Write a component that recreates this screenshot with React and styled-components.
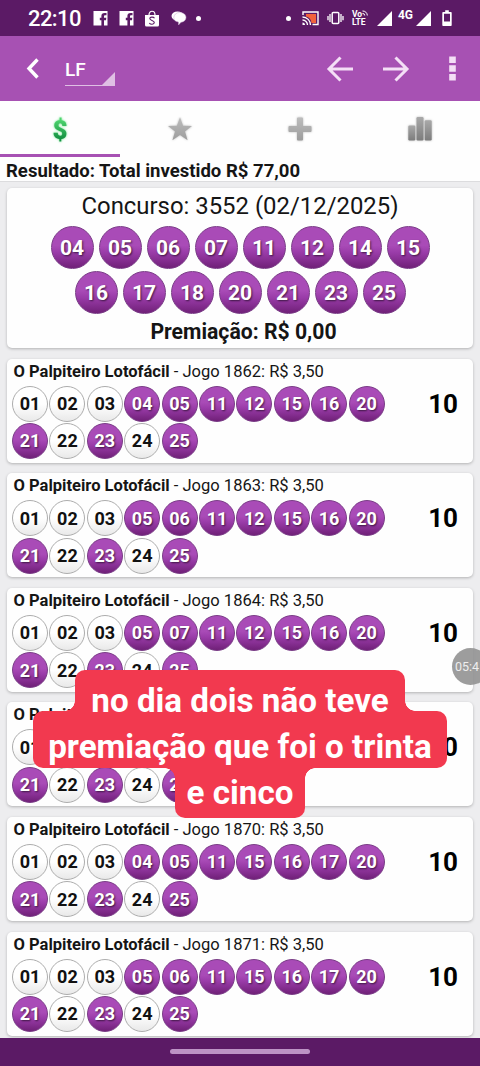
import React from 'react';
import styled, { createGlobalStyle } from 'styled-components';

const drawn = ['04', '05', '06', '07', '11', '12', '14', '15', '16', '17', '18', '20', '21', '23', '25'];

const games = [
    { id: 1862, numbers: ['01', '02', '03', '04', '05', '11', '12', '15', '16', '20', '21', '22', '23', '24', '25'] },
    { id: 1863, numbers: ['01', '02', '03', '05', '06', '11', '12', '15', '16', '20', '21', '22', '23', '24', '25'] },
    { id: 1864, numbers: ['01', '02', '03', '05', '07', '11', '12', '15', '16', '20', '21', '22', '23', '24', '25'] },
    { id: 1869, numbers: ['01', '02', '03', '06', '07', '11', '12', '15', '16', '20', '21', '22', '23', '24', '25'] },
    { id: 1870, numbers: ['01', '02', '03', '04', '05', '11', '15', '16', '17', '20', '21', '22', '23', '24', '25'] },
    { id: 1871, numbers: ['01', '02', '03', '05', '06', '11', '15', '16', '17', '20', '21', '22', '23', '24', '25'] },
];

export default function App () {
    return (
        <Screen>
            <GlobalStyle />
            <StatusBar />
            <Header />
            <Tabs />
            <Summary>Resultado: Total investido R$ 77,00</Summary>

            <Content>
                <ResultCard>
                    <Contest>Concurso: 3552 (02/12/2025)</Contest>
                    <DrawnBalls>
                        {drawn.map((n) => <BigBall key={n}>{n}</BigBall>)}
                    </DrawnBalls>
                    <Prize>Premiação: R$ 0,00</Prize>
                </ResultCard>

                {games.map((game) => <Game key={game.id} game={game} />)}
            </Content>

            <NavBar><NavHandle /></NavBar>

            <Recorder>05:4</Recorder>

            <Caption>
                <CaptionTop><span>no dia dois não teve</span></CaptionTop>
                <CaptionMiddle><span>premiação que foi o trinta</span></CaptionMiddle>
                <CaptionBottom><span>e cinco</span></CaptionBottom>
            </Caption>
        </Screen>
    )
}

function Game ({ game }) {
    return (
        <GameCard>
            <GameTitle><b>O Palpiteiro Lotofácil</b> - Jogo {game.id}: R$ 3,50</GameTitle>
            <GameBody>
                <GameBalls>
                    {game.numbers.map((n) => (
                        <Ball key={n} $hit={drawn.includes(n)}>{n}</Ball>
                    ))}
                </GameBalls>
                <Hits>10</Hits>
            </GameBody>
        </GameCard>
    )
}

function Facebook () {
    return (
        <svg width="15" height="15" viewBox="0 0 15 15">
            <path fill="#fff" d="M0.5 0H14.5V14.5H11V9.2H13L13.3 6.8H11V5.4C11 4.6 11.3 4.2 12.2 4.2H13.5V2H11.7C9.4 2 8.4 3.2 8.4 5.1V6.8H6.8V9.2H8.4V14.5H0.5Z" />
        </svg>
    )
}

function Signal () {
    return <svg width="15" height="15" viewBox="0 0 15 15"><path d="M15 0V15H0Z" fill="#fff" /></svg>
}

function StatusBar () {
    return (
        <Status>
            <Clock>22:10</Clock>
            <StatusIcons>
                <Facebook />
                <Facebook />
                <svg width="16" height="17" viewBox="0 0 16 17">
                    <path d="M1 5H15V15Q15 16.5 13.5 16.5H2.5Q1 16.5 1 15Z" fill="#fff" />
                    <path d="M5 5C5 0 11 0 11 5" fill="none" stroke="#fff" strokeWidth="1.2" />
                    <path d="M10.5 8.3C9.5 6.6 5.8 6.8 5.8 8.6C5.8 10.7 10.4 10.2 10.3 12.6C10.2 14.8 6.5 14.6 5.3 13.2" fill="none" stroke="#5b1a65" strokeWidth="1.1" />
                </svg>
                <svg width="16" height="16" viewBox="0 0 16 16">
                    <ellipse cx="6.5" cy="6" rx="6" ry="4.6" fill="#fff" />
                    <path d="M8.5 2.5C13 2.5 15 5 15 7.5C15 10 13 12 10 12.3L7.5 15V12C4.5 11.7 2.8 10 2.8 7.7C2.8 5 5 2.5 8.5 2.5Z" fill="#fff" stroke="#c9a8cf" strokeWidth=".5" />
                </svg>
            </StatusIcons>
            <Dot />
            <SystemIcons>
                <Dot />
                <svg width="17" height="15" viewBox="0 0 17 15">
                    <path d="M4 3H14V12H9.5C9 8 7 6 4 5.5Z" fill="#f2623c" />
                    <path d="M1 4V1H16V13.5H10.5" fill="none" stroke="#fff" strokeWidth="1.4" />
                    <path d="M.5 6A8 8 0 0 1 8.5 14M.5 9A5 5 0 0 1 5.5 14" fill="none" stroke="#fff" strokeWidth="1.3" />
                    <path d="M.5 11.5A2.5 2.5 0 0 1 3 14H.5Z" fill="#fff" />
                </svg>
                <svg width="17" height="14" viewBox="0 0 17 14">
                    <rect x="5.2" y="1.5" width="6.6" height="11" rx="1" fill="none" stroke="#fff" strokeWidth="1.5" />
                    <path d="M3 3V11M14 3V11M1 5V9.3M16 5V9.3" stroke="#fff" strokeWidth="1.3" />
                </svg>
                <Volte>
                    <span>Vo<svg width="6" height="6" viewBox="0 0 6 6"><path d="M.5 1A4.5 4.5 0 0 1 5.3 5.5M.5 3.5A2 2 0 0 1 2.7 5.5" fill="none" stroke="#fff" /></svg></span>
                    <span>LTE</span>
                </Volte>
                <Signal />
                <Network>4G</Network>
                <Signal />
                <Battery width="10" height="16" viewBox="0 0 10 16">
                    <path d="M3.2 .2H6.8V2H9Q9.7 2 9.7 3V15Q9.7 16 9 16H1Q.3 16 .3 15V3Q.3 2 1 2H3.2ZM2 3.7V11.6H8V3.7Z" fill="#fff" fillRule="evenodd" />
                </Battery>
            </SystemIcons>
        </Status>
    )
}

function Header () {
    return (
        <Toolbar>
            <svg width="13" height="21" viewBox="0 0 13 21">
                <path d="M11.5 1.5L3 10.5L11.5 19.5" fill="none" stroke="#fff" strokeWidth="3.4" />
            </svg>
            <Select>
                LF
                <svg width="13" height="13" viewBox="0 0 13 13"><path d="M13 0V13H0Z" fill="#dfbfe4" /></svg>
            </Select>
            <Actions>
                <svg width="28" height="26" viewBox="0 0 28 26">
                    <path d="M27 13H2.5M14.5 1.5L3 13L14.5 24.5" fill="none" stroke="#f4dff6" strokeWidth="3" />
                </svg>
                <svg width="28" height="26" viewBox="0 0 28 26">
                    <path d="M1 13H25.5M13.5 1.5L25 13L13.5 24.5" fill="none" stroke="#f4dff6" strokeWidth="3" />
                </svg>
                <svg width="7" height="25" viewBox="0 0 7 25">
                    <path d="M.2 .5H6.8V7H.2ZM.2 9.3H6.8V15.8H.2ZM.2 18H6.8V24.5H.2Z" fill="#f4dff6" />
                </svg>
            </Actions>
        </Toolbar>
    )
}

function Tabs () {
    return (
        <TabRow>
            <Tab $active><Dollar>$</Dollar></Tab>
            <Tab>
                <svg width="26" height="26" viewBox="0 0 26 26">
                    <defs>
                        <linearGradient id="gray" x1="0" y1="0" x2="0" y2="1">
                            <stop offset="0" stopColor="#bdbdbd" />
                            <stop offset="1" stopColor="#9c9c9c" />
                        </linearGradient>
                    </defs>
                    <path d="M13 1.2L16.1 9.7L25 9.9L18 15.4L20.6 24.3L13 19.1L5.4 24.3L8 15.4L1 9.9L9.9 9.7Z" fill="url(#gray)" />
                </svg>
            </Tab>
            <Tab>
                <svg width="26" height="26" viewBox="0 0 26 26">
                    <path d="M11 1.5H15Q16 1.5 16 2.5V10H23.5Q24.5 10 24.5 11V15Q24.5 16 23.5 16H16V23.5Q16 24.5 15 24.5H11Q10 24.5 10 23.5V16H2.5Q1.5 16 1.5 15V11Q1.5 10 2.5 10H10V2.5Q10 1.5 11 1.5Z" fill="url(#gray)" />
                </svg>
            </Tab>
            <Tab>
                <svg width="26" height="26" viewBox="0 0 26 26">
                    <defs>
                        <linearGradient id="bars" x1="0" y1="0" x2="0" y2="1">
                            <stop offset="0" stopColor="#a9a9a9" />
                            <stop offset="1" stopColor="#7c7c7c" />
                        </linearGradient>
                    </defs>
                    <rect x="1.3" y="9.5" width="7" height="15" rx="1.2" fill="url(#bars)" />
                    <rect x="9.5" y="1" width="7" height="23.5" rx="1.2" fill="url(#bars)" />
                    <rect x="17.7" y="4.3" width="7" height="20.2" rx="1.2" fill="url(#bars)" />
                </svg>
            </Tab>
        </TabRow>
    )
}

const GlobalStyle = createGlobalStyle`
    * {
        box-sizing: border-box;
    }

    body {
        margin: 0;
        font-family: Roboto, "Liberation Sans", sans-serif;
        color: #151515;
    }

    svg {
        display: block;
        flex-shrink: 0;
    }
`

const Screen = styled.div`
    position: relative;
    display: flex;
    flex-direction: column;
    width: 480px;
    height: 1066px;
    overflow: hidden;
    background-color: #ededef;
`

const Status = styled.div`
    display: flex;
    align-items: center;
    flex-shrink: 0;
    height: 36px;
    padding: 0 28px 0 28px;
    background-color: #5b1a65;
    color: #fff;
`

const Clock = styled.span`
    width: 65px;
    font-size: 22px;
    line-height: 36px;
    font-weight: 500;
    letter-spacing: -0.6px;
    padding-top: 2px;
`

const StatusIcons = styled.div`
    display: flex;
    align-items: center;
    gap: 10.5px;
    margin-right: 9px;
`

const SystemIcons = styled.div`
    display: flex;
    align-items: center;
    margin-left: auto;
    gap: 8px;
`

const Dot = styled.span`
    width: 5px;
    height: 5px;
    margin-right: 3px;
    border-radius: 50%;
    background-color: #fff;
`

const Volte = styled.div`
    display: flex;
    flex-direction: column;
    width: 17px;
    font-size: 8.5px;
    line-height: 8px;
    font-weight: 700;

    span {
        display: flex;
    }
`

const Network = styled.span`
    margin: -7px -5px 0 -2px;
    font-size: 12px;
    font-weight: 700;
`

const Battery = styled.svg`
    margin-left: 3px;
`

const Toolbar = styled.header`
    display: flex;
    align-items: center;
    flex-shrink: 0;
    height: 65px;
    padding: 0 24px 0 26px;
    background-color: #a751b3;
`

const Select = styled.div`
    display: flex;
    justify-content: space-between;
    align-items: flex-end;
    width: 50px;
    height: 28px;
    margin: 7px 0 0 26px;
    border-bottom: 1px solid #dfbfe4;
    font-size: 19px;
    line-height: 31px;
    font-weight: 500;
    color: #fff;
`

const Actions = styled.div`
    display: flex;
    align-items: center;
    gap: 28px;
    margin-left: auto;

    svg:last-child {
        margin-left: 11px;
    }
`

const TabRow = styled.nav`
    display: grid;
    grid-template-columns: repeat(4, 1fr);
    flex-shrink: 0;
    height: 56px;
    background-color: #fefefe;
`

const Tab = styled.div`
    display: flex;
    justify-content: center;
    align-items: center;
    border-bottom: 3px solid ${(props) => (props.$active ? '#a751b3' : 'transparent')};
    padding-top: 3px;

    svg {
        filter: drop-shadow(0 0 1px #0004);
    }
`

const Dollar = styled.span`
    padding-top: 2px;
    font-size: 26px;
    line-height: 30px;
    font-weight: 900;
    color: transparent;
    background: linear-gradient(#4fd56f 20%, #159143 80%);
    background-clip: text;
    filter: drop-shadow(0 0 1px #62e482);
`

const Summary = styled.div`
    flex-shrink: 0;
    height: 25px;
    padding-left: 6px;
    border-bottom: 1px solid #dcdcde;
    background-color: #fefefe;
    font-size: 18.55px;
    line-height: 28px;
    font-weight: 700;
    white-space: nowrap;
`

const Content = styled.main`
    display: flex;
    flex-direction: column;
    flex: 1;
    min-height: 0;
    gap: 10.6px;
    padding: 6px 7px 0;
    overflow: hidden;
`

const Card = styled.section`
    flex-shrink: 0;
    background-color: #fefefe;
    border-radius: 5px;
    box-shadow: 0 1px 3px #00000040;
`

const ResultCard = styled(Card)`
    display: flex;
    flex-direction: column;
    align-items: center;
    height: 160px;
`

const Contest = styled.div`
    flex-shrink: 0;
    height: 37.5px;
    font-size: 23.9px;
    line-height: 36px;
`

const DrawnBalls = styled.div`
    display: flex;
    flex-wrap: wrap;
    flex-shrink: 0;
    justify-content: center;
    gap: 2.5px 5px;
    width: 390px;
`

const Prize = styled.div`
    font-size: 21.2px;
    line-height: 35px;
    font-weight: 700;
    padding-left: 7px;
`

const Ball = styled.span`
    display: flex;
    justify-content: center;
    align-items: center;
    width: 36px;
    height: 36px;
    border: 1px solid ${(props) => (props.$hit ? '#793b86' : '#adadad')};
    border-radius: 50%;
    background: ${(props) => (props.$hit
        ? 'linear-gradient(#a94bb7 45%, #9a3ca9 62%, #702078)'
        : 'linear-gradient(#fff 50%, #e9e9e9)')};
    font-size: 18px;
    font-weight: 700;
    color: ${(props) => (props.$hit ? '#fff' : '#111')};
    text-shadow: ${(props) => (props.$hit ? '1px 1px 2px #0009' : 'none')};
`

const BigBall = styled(Ball).attrs({ $hit: true })`
    width: 43px;
    height: 43px;
    padding-top: 1px;
    font-size: 21px;
`

const GameCard = styled(Card)`
    height: 104px;
    padding: 0 15px 0 5px;
`

const GameTitle = styled.div`
    height: 27px;
    padding-left: 1.5px;
    font-size: 16.55px;
    line-height: 25px;
    white-space: nowrap;
`

const GameBody = styled.div`
    display: flex;
    justify-content: space-between;
`

const GameBalls = styled.div`
    display: grid;
    grid-template-columns: repeat(10, 36px);
    gap: 1.4px;
`

const Hits = styled.span`
    font-size: 26px;
    line-height: 36px;
    font-weight: 700;
    color: #000;
`

const NavBar = styled.div`
    display: flex;
    justify-content: center;
    flex-shrink: 0;
    height: 28px;
    padding-top: 11px;
    background-color: #5b1a65;
`

const NavHandle = styled.span`
    width: 140px;
    height: 5px;
    border-radius: 3px;
    background-color: #bd93c5;
`

// floating screen recorder bubble
const Recorder = styled.div`
    position: absolute;
    top: 648px;
    left: 452px;
    width: 37px;
    height: 37px;
    padding-left: 3px;
    border-radius: 50%;
    background-color: #929292e6;
    font-size: 12.5px;
    line-height: 38px;
    color: #eee;
`

const Caption = styled.div`
    position: absolute;
    top: 670px;
    left: 33px;
    display: flex;
    flex-direction: column;
    align-items: center;
    width: 414px;
    font-size: 33.2px;
    font-weight: 700;
    color: #fff;
    white-space: nowrap;
`

const CaptionLine = styled.div`
    position: relative;
    display: flex;
    justify-content: center;
    background-color: #f2394f;

    /* letters hang over the edge of the line below */
    span {
        position: relative;
        z-index: 1;
    }

    &::before,
    &::after {
        content: '';
        position: absolute;
        width: 10px;
        height: 10px;
    }

    &::before {
        right: 100%;
    }

    &::after {
        left: 100%;
    }
`

const CaptionTop = styled(CaptionLine)`
    width: 330px;
    height: 41px;
    line-height: 61px;
    border-radius: 10px 10px 0 0;

    &::before {
        bottom: 0;
        background: radial-gradient(circle at 0 0, transparent 9.5px, #f2394f 10px);
    }

    &::after {
        bottom: 0;
        background: radial-gradient(circle at 100% 0, transparent 9.5px, #f2394f 10px);
    }
`

const CaptionMiddle = styled(CaptionLine)`
    width: 414px;
    height: 57px;
    line-height: 71px;
    border-radius: 10px;
`

const CaptionBottom = styled(CaptionLine)`
    width: 130px;
    height: 50px;
    line-height: 49px;
    border-radius: 0 0 10px 10px;

    &::before {
        top: 0;
        background: radial-gradient(circle at 0 100%, transparent 9.5px, #f2394f 10px);
    }

    &::after {
        top: 0;
        background: radial-gradient(circle at 100% 100%, transparent 9.5px, #f2394f 10px);
    }
`
